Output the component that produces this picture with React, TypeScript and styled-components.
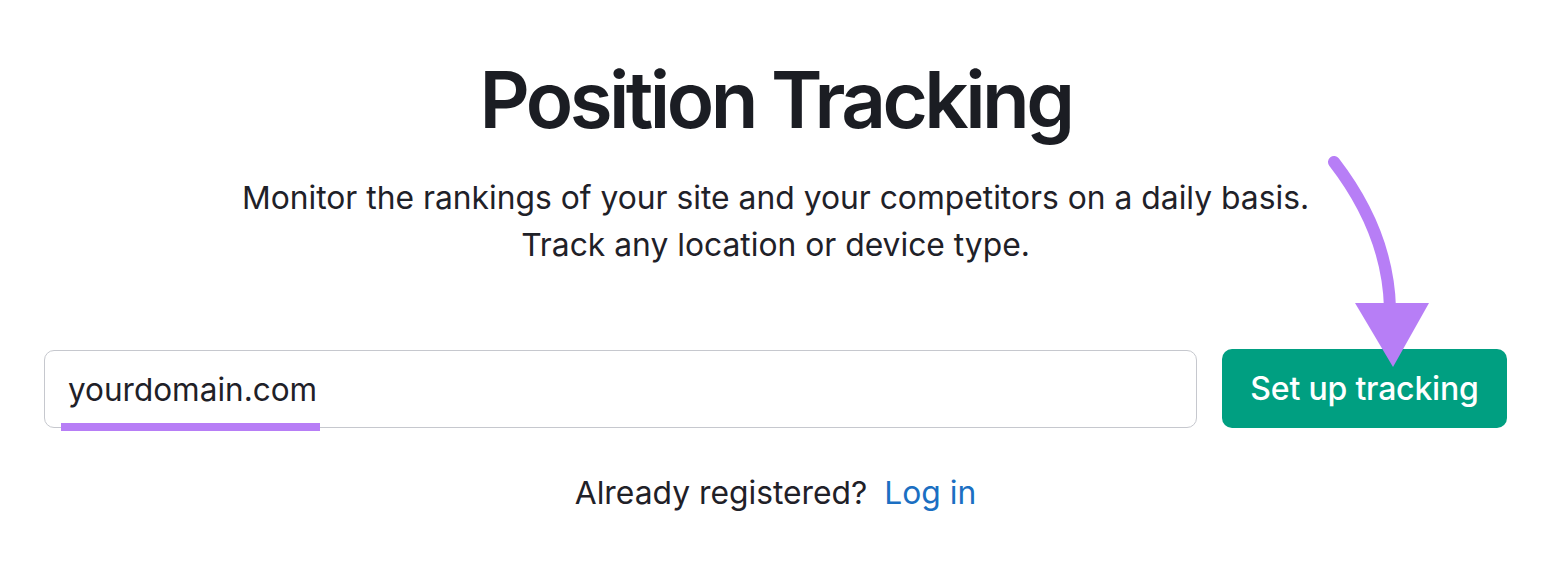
import React from "react";
import styled, { createGlobalStyle } from "styled-components";

const Global = createGlobalStyle`
  html, body { margin: 0; padding: 0; background: #ffffff; }
  body { font-family: "Inter", "Liberation Sans", sans-serif; color: #1f2128; }
`;

const Page = styled.div`
  position: relative;
  width: 1557px;
  height: 582px;
  box-sizing: border-box;
  display: flex;
  flex-direction: column;
  align-items: center;
  padding: 57px 50px 0 44px;
`;

const Title = styled.h1`
  margin: 0;
  font-family: "Inter", "Liberation Sans", sans-serif;
  font-weight: 600;
  font-size: 78px;
  line-height: 86px;
  letter-spacing: -3.55px;
  color: #1b1d23;
`;

const Subtitle = styled.p`
  margin: 31px 0 0;
  font-size: 31.8px;
  line-height: 47px;
  text-align: center;
  color: #1f2128;
`;

const FormRow = styled.div`
  margin-top: 82px;
  width: 100%;
  display: flex;
  gap: 25px;
  align-items: stretch;
`;

const InputBox = styled.div`
  position: relative;
  flex: 1;
  height: 78px;
  box-sizing: border-box;
  border: 1.5px solid #c6c8ce;
  border-radius: 10px;
  display: flex;
  align-items: center;
  padding-left: 23px;
  font-size: 31.5px;
  color: #1f2128;
`;

const Underline = styled.span`
  position: absolute;
  left: 16px;
  bottom: -4px;
  width: 259px;
  height: 8px;
  background: #b77ef6;
`;

const Button = styled.button`
  width: 285px;
  height: 79px;
  margin-top: -1px;
  border: none;
  border-radius: 10px;
  background: #009f81;
  color: #ffffff;
  font-family: "Inter", "Liberation Sans", sans-serif;
  font-weight: 500;
  font-size: 32px;
  letter-spacing: -0.2px;
  cursor: pointer;
`;

const Footer = styled.p`
  margin: 45px 0 0;
  font-size: 31.8px;
  line-height: 40px;
  color: #1f2128;
`;

const LoginLink = styled.a`
  color: #1b6fc2;
  text-decoration: none;
  margin-left: 17px;
`;

const ArrowSvg = styled.svg`
  position: absolute;
  left: 0;
  top: 0;
  pointer-events: none;
`;

export default function App() {
  return (
    <>
      <Global />
      <Page>
        <Title>Position Tracking</Title>
        <Subtitle>
          Monitor the rankings of your site and your competitors on a daily basis.
          <br />
          Track any location or device type.
        </Subtitle>
        <FormRow>
          <InputBox>
            yourdomain.com
            <Underline />
          </InputBox>
          <Button>Set up tracking</Button>
        </FormRow>
        <Footer>
          Already registered?
          <LoginLink href="#">Log in</LoginLink>
        </Footer>
        <ArrowSvg width="1557" height="582" viewBox="0 0 1557 582">
          <path
            d="M1334 162 Q1388 232 1390 308"
            fill="none"
            stroke="#b77ef6"
            strokeWidth="12"
            strokeLinecap="round"
          />
          <polygon points="1355,303 1429,303 1393,367" fill="#b77ef6" />
        </ArrowSvg>
      </Page>
    </>
  );
}
